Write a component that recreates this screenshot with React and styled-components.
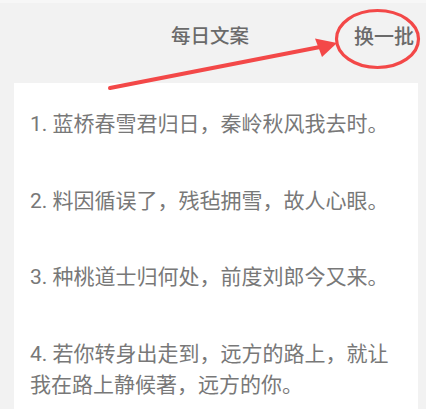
import React from 'react';
import styled, { createGlobalStyle } from 'styled-components';

const GlobalStyle = createGlobalStyle`
  html, body {
    margin: 0;
    padding: 0;
    background: #f2f2f2;
  }
  body {
    font-family: Roboto, "Noto Sans CJK SC", sans-serif;
  }
`;

const Page = styled.div`
  position: relative;
  width: 426px;
  height: 409px;
  overflow: hidden;
  background: #f2f2f2;
`;

const StatusStrip = styled.div`
  height: 3px;
  background: #f7f7f7;
`;

const Header = styled.header`
  display: grid;
  grid-template-columns: 1fr auto 1fr;
  align-items: center;
  height: 68px;
  padding: 0 12px 0 0;
  margin-bottom: 12px;
`;

const Title = styled.h1`
  grid-column: 2;
  margin: 0 0 0 6px;
  font-size: 19.5px;
  font-weight: 500;
  color: #6a6a6a;
  line-height: 1;
`;

const RefreshButton = styled.button`
  justify-self: end;
  border: none;
  background: none;
  padding: 0;
  font-family: inherit;
  font-size: 20px;
  font-weight: 500;
  color: #6a6a6a;
  line-height: 1;
  cursor: pointer;
`;

const Card = styled.section`
  display: flex;
  flex-direction: column;
  gap: 45px;
  margin: 0 8px 0 14px;
  padding: 26px 16px 30px;
  background: #fff;
`;

const Quote = styled.p`
  margin: 0;
  font-size: 21px;
  line-height: 31.5px;
  color: #787878;
`;

const Annotation = styled.svg`
  position: absolute;
  left: 0;
  top: 0;
  pointer-events: none;
`;

const quotes = [
  '蓝桥春雪君归日，秦岭秋风我去时。',
  '料因循误了，残毡拥雪，故人心眼。',
  '种桃道士归何处，前度刘郎今又来。',
  '若你转身出走到，远方的路上，就让我在路上静候著，远方的你。',
];

export default function App() {
  return (
    <>
      <GlobalStyle />
      <Page>
        <StatusStrip />
        <Header>
          <Title>每日文案</Title>
          <RefreshButton>换一批</RefreshButton>
        </Header>
        <Card>
          {quotes.map((q, i) => (
            <Quote key={i}>{`${i + 1}. ${q}`}</Quote>
          ))}
        </Card>
        <Annotation width="426" height="409" viewBox="0 0 426 409">
          <ellipse cx="377.5" cy="39" rx="41" ry="28.5" fill="none" stroke="#f34848" strokeWidth="3.2" />
          <line x1="110" y1="88" x2="320" y2="47" stroke="#f34848" strokeWidth="4" strokeLinecap="round" />
          <polygon points="337,43 315,38.5 322,57" fill="#f34848" />
        </Annotation>
      </Page>
    </>
  );
}
